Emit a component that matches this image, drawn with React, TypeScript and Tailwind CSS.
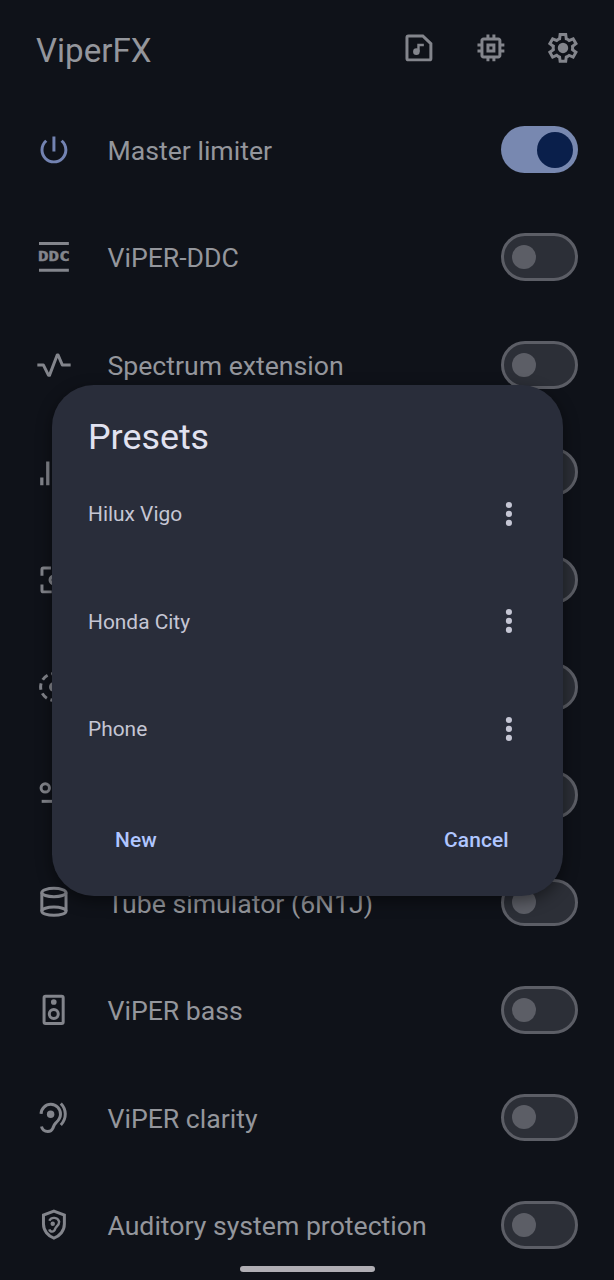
import type { ReactNode } from "react";

function Icon({ children, className = "" }: { children: ReactNode; className?: string }) {
  return (
    <svg viewBox="0 0 24 24" className={`h-[35.85px] w-[35.85px] shrink-0 ${className}`} fill="none" stroke="currentColor" strokeWidth="2">
      {children}
    </svg>
  );
}

const solid = { fill: "currentColor", stroke: "none" } as const;

const MusicFileIcon = () => (
  <Icon>
    <path d="M5 4h9.6L20 9.2V19a1 1 0 0 1-1 1H5a1 1 0 0 1-1-1V5a1 1 0 0 1 1-1z" />
    <circle cx="10.3" cy="14.5" r="2.2" {...solid} />
    <path d="M11.7 14.5V10h3.6" strokeWidth="1.6" />
  </Icon>
);

const ChipIcon = () => (
  <Icon>
    <path
      {...solid}
      d="M15 9H9v6h6V9zm-2 4h-2v-2h2v2zm8-2V9h-2V7c0-1.1-.9-2-2-2h-2V3h-2v2h-2V3H9v2H7c-1.1 0-2 .9-2 2v2H3v2h2v2H3v2h2v2c0 1.1.9 2 2 2h2v2h2v-2h2v2h2v-2h2c1.1 0 2-.9 2-2v-2h2v-2h-2v-2h2zm-4 6H7V7h10v10z"
    />
  </Icon>
);

const GearIcon = () => (
  <Icon>
    <path
      {...solid}
      fillRule="evenodd"
      d="m9.25 22-.4-3.2q-.325-.125-.612-.3t-.563-.375L4.7 19.375l-2.75-4.75 2.575-1.95Q4.5 12.5 4.5 12.338v-.675q0-.163.025-.338L1.95 9.375l2.75-4.75 2.975 1.25q.275-.2.575-.375t.6-.3l.4-3.2h5.5l.4 3.2q.325.125.613.3t.562.375l2.975-1.25 2.75 4.75-2.575 1.95q.025.175.025.338v.674q0 .163-.05.338l2.575 1.95-2.75 4.75-2.95-1.25q-.275.2-.575.375t-.6.3l-.4 3.2zM11 20h1.975l.35-2.65q.775-.2 1.438-.587t1.212-.938l2.475 1.025.975-1.7-2.15-1.625q.125-.35.175-.737T17.5 12t-.05-.787-.175-.738l2.15-1.625-.975-1.7-2.475 1.05q-.55-.575-1.212-.962t-1.438-.588L13 4h-1.975l-.35 2.65q-.775.2-1.437.588t-1.213.937L5.55 7.15l-.975 1.7 2.15 1.6q-.125.375-.175.75t-.05.8q0 .4.05.775t.175.75l-2.15 1.625.975 1.7 2.475-1.05q.55.575 1.213.963t1.437.587z"
    />
    <circle cx="12.05" cy="12" r="3.5" {...solid} />
  </Icon>
);

const PowerIcon = () => (
  <Icon className="text-[#7383b2]">
    <path
      {...solid}
      d="M13 3h-2v10h2V3zm4.83 2.17l-1.42 1.42C17.99 7.86 19 9.81 19 12c0 3.87-3.13 7-7 7s-7-3.13-7-7c0-2.19 1.01-4.14 2.58-5.42L6.17 5.17C4.23 6.82 3 9.26 3 12c0 4.97 4.03 9 9 9s9-4.03 9-9c0-2.74-1.23-5.18-3.17-6.83z"
    />
  </Icon>
);

const DdcIcon = () => (
  <Icon>
    <path d="M2 3h20M2 21h20" />
    <text
      x="1.4"
      y="15"
      textLength="21.2"
      lengthAdjust="spacingAndGlyphs"
      className="font-['DejaVu_Sans_Mono',monospace] text-[9.4px] font-bold"
      fill="currentColor"
      strokeWidth="0.3"
    >
      DDC
    </text>
  </Icon>
);

const WaveIcon = () => (
  <Icon className="overflow-visible">
    <path d="M.9 12h4l3.5 7h.6l5.2-13.6h.6L17.6 12h5.6" strokeLinejoin="round" />
  </Icon>
);

const BarsIcon = () => (
  <Icon>
    <path d="M3.9 15.8V21M7.9 5v16M12 10v11M16.1 3v18M20.1 13v8" strokeWidth="2.2" />
  </Icon>
);

const FieldIcon = () => (
  <Icon>
    <path d="M4 9.2V5a1 1 0 0 1 1-1h5M14 4h5a1 1 0 0 1 1 1v4.2M20 15v4a1 1 0 0 1-1 1h-5M10.5 20H5a1 1 0 0 1-1-1v-4" />
    <circle cx="12" cy="12" r="2.6" />
  </Icon>
);

const SurroundIcon = () => (
  <Icon>
    <circle cx="12" cy="12" r="8.9" strokeDasharray="4.4 2.59" strokeDashoffset="2.1" />
    <circle cx="12" cy="12" r="3.3" {...solid} />
  </Icon>
);

const DifferentialIcon = () => (
  <Icon>
    <circle cx="6.2" cy="7.3" r="2.8" />
    <circle cx="17.8" cy="7.3" r="2.8" />
    <path d="M3.8 16.3h16.4" />
  </Icon>
);

const TubeIcon = () => (
  <Icon>
    <ellipse cx="12" cy="5.7" rx="8.1" ry="2.8" />
    <ellipse cx="12" cy="18.2" rx="8.1" ry="2.8" />
    <path d="M3.9 5.7v12.5M20.1 5.7v12.5" />
  </Icon>
);

const SpeakerIcon = () => (
  <Icon>
    <rect x="5.4" y="2.9" width="12.8" height="18.2" rx="1" />
    <circle cx="11.9" cy="6.7" r="1.9" {...solid} />
    <circle cx="11.9" cy="14.7" r="3" />
  </Icon>
);

const EarIcon = () => (
  <Icon>
    <path d="M3.4 9.3a6.5 6.5 0 0 1 13 .2c0 2.9-1.7 4.4-3.1 5.8-1.3 1.3-1.5 2.4-2 3.6-.6 1.4-1.8 2.2-3.4 2.2-2.3 0-3.9-1.5-4.2-3.3" />
    <circle cx="9.8" cy="9.5" r="2.5" {...solid} />
    <path d="M16.6 2.3c3.8 3.8 4.2 10 0 14.4" />
  </Icon>
);

const ShieldEarIcon = () => (
  <Icon>
    <path d="M12 2.8l7 2.6v6c0 4.4-3 8-7 9.4-4-1.4-7-5-7-9.4v-6z" />
    <path d="M8.9 9.2A3.6 3.6 0 0 1 15.5 9.8c0 2.5-2.1 3.2-2.6 4.7-.5 1.6-1.3 2-2.1 2-1 0-1.7-.7-1.9-1.5" strokeWidth="1.6" />
    <circle cx="11.2" cy="11.2" r="1.5" {...solid} />
  </Icon>
);

const MoreIcon = () => (
  <Icon className="text-[#c5c6d4]">
    <circle cx="12" cy="6" r="2.05" {...solid} />
    <circle cx="12" cy="12" r="2.05" {...solid} />
    <circle cx="12" cy="18" r="2.05" {...solid} />
  </Icon>
);

function Toggle({ on }: { on: boolean }) {
  return on ? (
    <div className="flex h-[47.8px] w-[77.7px] shrink-0 items-center justify-end rounded-full bg-[#7888b0] pr-[5.5px]">
      <div className="h-9 w-9 rounded-full bg-[#0a1f4b]" />
    </div>
  ) : (
    <div className="flex h-[47.8px] w-[77.7px] shrink-0 items-center rounded-full border-3 border-[#5c5e66] bg-[#2c2f37] pl-[8.5px]">
      <div className="h-6 w-6 rounded-full bg-[#5c5e66]" />
    </div>
  );
}

const effects = [
  { label: "Master limiter", icon: <PowerIcon />, on: true },
  { label: "ViPER-DDC", icon: <DdcIcon />, on: false },
  { label: "Spectrum extension", icon: <WaveIcon />, on: false },
  { label: "", icon: <BarsIcon />, on: false },
  { label: "", icon: <FieldIcon />, on: false },
  { label: "", icon: <SurroundIcon />, on: false },
  { label: "", icon: <DifferentialIcon />, on: false },
  { label: "Tube simulator (6N1J)", icon: <TubeIcon />, on: false },
  { label: "ViPER bass", icon: <SpeakerIcon />, on: false },
  { label: "ViPER clarity", icon: <EarIcon />, on: false },
  { label: "Auditory system protection", icon: <ShieldEarIcon />, on: false },
];

const presets = ["Hilux Vigo", "Honda City", "Phone"];

export default function App() {
  return (
    <div className="relative h-[1280px] w-[614px] overflow-hidden bg-[#0f1219] font-[Roboto,sans-serif] text-[#83858c]">
      <header className="flex h-[95.8px] items-center justify-between pr-[33px] pl-9">
        <h1 className="mt-[5px] text-[33.1px] leading-none text-[#94969c]">ViperFX</h1>
        <div className="flex gap-[36.2px]">
          <MusicFileIcon />
          <ChipIcon />
          <GearIcon />
        </div>
      </header>
      <main>
        {effects.map((e, i) => (
          <div key={i} className="flex h-[107.55px] items-center pr-[35.7px] pl-9">
            {e.icon}
            <span className="mt-[3px] ml-[35.6px] flex-1 text-[26.65px] leading-none whitespace-nowrap text-[#94969c]">{e.label}</span>
            <Toggle on={e.on} />
          </div>
        ))}
      </main>
      <div className="absolute top-[1266px] left-[239.5px] h-1.5 w-[135px] rounded-full bg-[#b0aeb4]" />

      <section className="absolute top-[385px] left-[52px] flex h-[510.6px] w-[510.6px] flex-col rounded-[41.8px] bg-[#292d3a] px-9 pt-8 shadow-[0_5px_16px_rgba(0,0,0,0.45)]">
        <h2 className="flex h-[42.7px] items-center text-[35.85px] leading-none text-[#e1e2f0]">Presets</h2>
        {presets.map((p) => (
          <div key={p} className="flex h-[107.55px] items-center justify-between">
            <span className="mt-0.5 text-[20.9px] leading-none text-[#c5c6d4]">{p}</span>
            <MoreIcon />
          </div>
        ))}
        <div className="mt-10 flex justify-between pr-[17.8px] pl-[27px] text-[20.9px] leading-9 font-medium tracking-[0.15px] text-[#b0c6ff]">
          <button>New</button>
          <button>Cancel</button>
        </div>
      </section>
    </div>
  );
}
